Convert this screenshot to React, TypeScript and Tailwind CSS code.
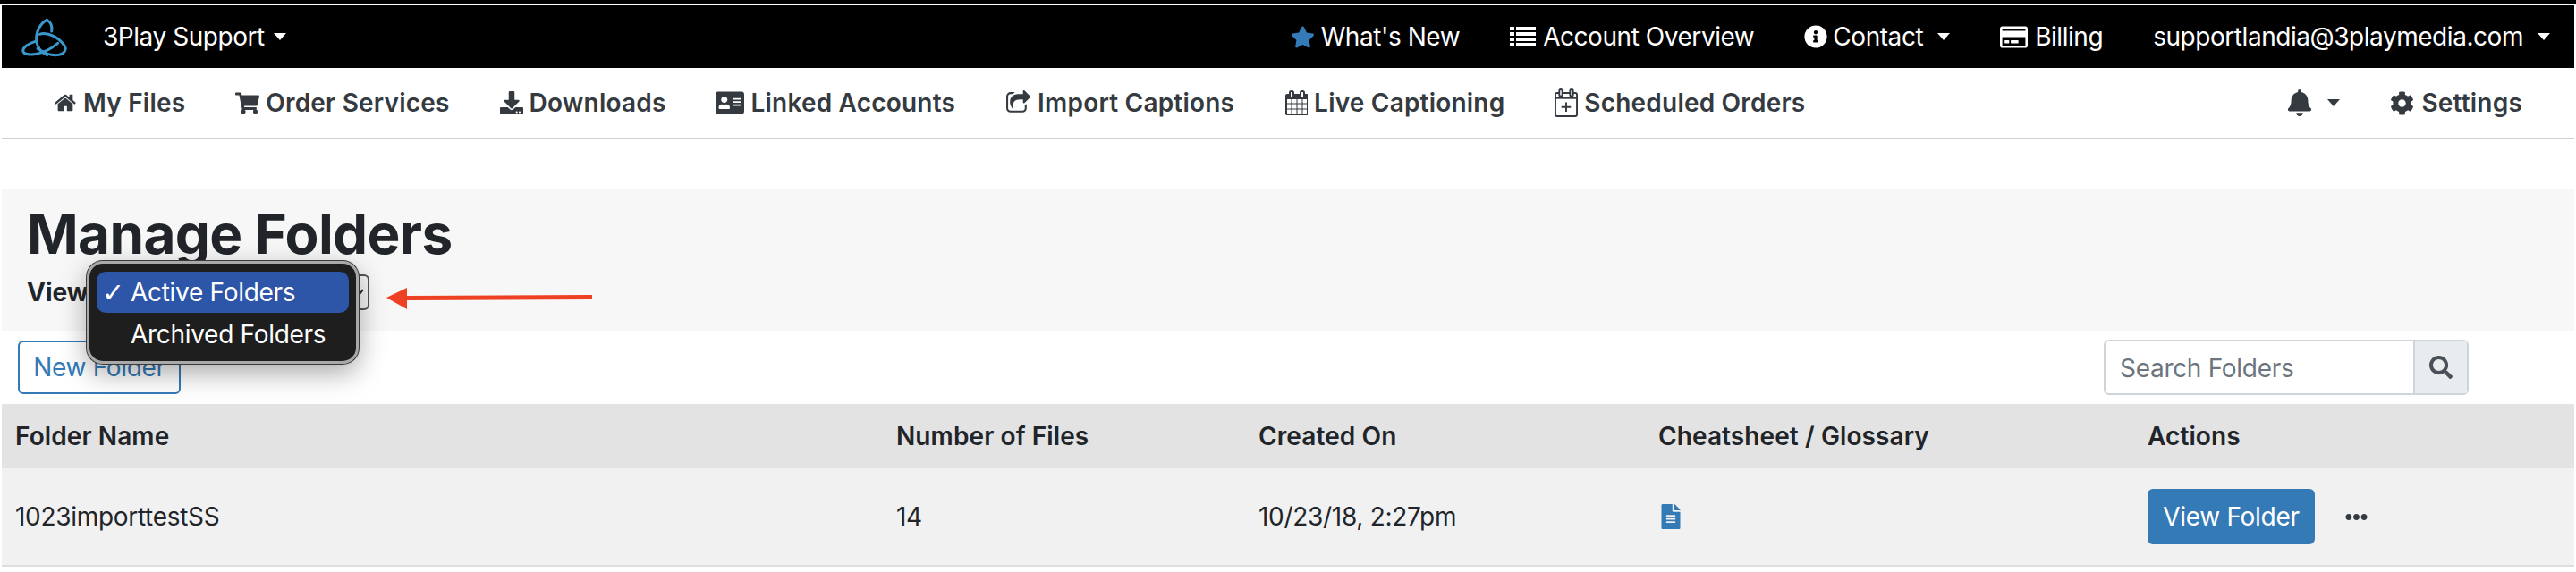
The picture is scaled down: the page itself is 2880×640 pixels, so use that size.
import React from 'react';
import {
  FaShoppingCart, FaDownload, FaAddressCard,
  FaStar, FaInfoCircle, FaRegCreditCard, FaBell, FaCog, FaSearch, FaFileAlt, FaEllipsisH,
} from 'react-icons/fa';

const Caret = ({ gap = 'ml-[16px]' }: { gap?: string }) => (
  <span className={`${gap} inline-block border-x-[7px] border-t-[8px] border-x-transparent border-t-current`} />
);

const Logo = () => (
  <svg viewBox="0 0 216 168" className="h-[56px] w-[72px]" fill="none" stroke="#3a97cb" strokeWidth="9" strokeLinecap="round">
    <path d="M115 28 C92 40 78 70 80 95 C82 120 98 138 116 146" />
    <path d="M115 28 C128 36 134 50 131 66" />
    <path d="M76 100 C50 108 32 122 36 134 C42 150 100 150 152 106" />
    <path d="M90 76 C120 66 155 88 174 114 C184 130 170 146 146 146 C126 146 100 136 84 124" />
  </svg>
);

const HomeIcon = () => (
  <svg viewBox="0 0 1792 1792" width="26" height="26" fill="currentColor">
    <path d="M1472 992v480q0 26-19 45t-45 19h-384v-384h-256v384h-384q-26 0-45-19t-19-45v-480q0-1 .5-3t.5-3l575-474 575 474q1 2 1 6zm223-69l-62 74q-8 9-21 11h-3q-13 0-21-7l-692-577-692 577q-12 8-24 7-13-2-21-11l-62-74q-8-10-7-23.500t11-21.500l719-599q32-26 76-26t76 26l244 204v-195q0-14 9-23t23-9h192q14 0 23 9t9 23v408l219 182q10 8 11 21.500t-7 23.500z" />
  </svg>
);

const ShareIcon = () => (
  <svg viewBox="0 0 1792 1792" width="29" height="29" fill="currentColor">
    <path d="M1472 989v259q0 119-84.500 203.500t-203.500 84.500h-832q-119 0-203.500-84.500t-84.500-203.500v-832q0-119 84.500-203.500t203.500-84.500h255q13 0 22.500 9.500t9.500 22.500q0 27-26 32-77 26-133 60-10 4-16 4h-112q-66 0-113 47t-47 113v832q0 66 47 113t113 47h832q66 0 113-47t47-113v-214q0-19 18-29 28-13 54-37 16-16 35-8 21 9 21 29zm237-496l-384 384q-18 19-45 19-12 0-25-5-39-17-39-59v-192h-160q-323 0-438 131-119 137-74 473 3 23-20 34-8 2-12 2-16 0-26-13-10-14-21-31t-39.500-68.500-49.500-99-38.500-114-17.500-122.500q0-49 3.500-91t14-90 28-88 47-81.500 68.500-74 94.500-61.500 124.500-48.500 159.500-30.500 196.500-11h160v-192q0-42 39-59 13-5 25-5 26 0 45 19l384 384q19 19 19 45t-19 45z" />
  </svg>
);

const CalendarIcon = () => (
  <svg viewBox="0 0 1664 1792" width="26" height="28" fill="currentColor">
    <path d="M192 1664h288v-288h-288v288zm352 0h320v-288h-320v288zm-352-352h288v-320h-288v320zm352 0h320v-320h-320v320zm-352-384h288v-288h-288v288zm736 736h320v-288h-320v288zm-384-736h320v-288h-320v288zm768 736h288v-288h-288v288zm-384-352h320v-320h-320v320zm-352-864v-288q0-13-9.500-22.500t-22.500-9.500h-64q-13 0-22.500 9.500t-9.500 22.500v288q0 13 9.500 22.500t22.500 9.500h64q13 0 22.500-9.500t9.500-22.500zm736 864h288v-320h-288v320zm-384-384h320v-288h-320v288zm384 0h288v-288h-288v288zm32-480v-288q0-13-9.500-22.500t-22.500-9.500h-64q-13 0-22.500 9.500t-9.500 22.500v288q0 13 9.500 22.500t22.500 9.500h64q13 0 22.500-9.500t9.500-22.500zm384-64v1280q0 52-38 90t-90 38h-1408q-52 0-90-38t-38-90v-1280q0-52 38-90t90-38h128v-96q0-66 47-113t113-47h64q66 0 113 47t47 113v96h384v-96q0-66 47-113t113-47h64q66 0 113 47t47 113v96h128q52 0 90 38t38 90z" />
  </svg>
);

const CalendarPlusIcon = () => (
  <svg viewBox="0 0 27 33" width="26" height="32" fill="none" stroke="currentColor" strokeWidth="2">
    <rect x="1" y="5" width="25" height="27" rx="2" />
    <path d="M1 11h25" />
    <rect x="5.500" y="1" width="3.500" height="8" rx="1.750" fill="#fff" />
    <rect x="18" y="1" width="3.500" height="8" rx="1.750" fill="#fff" />
    <path d="M13.500 16v11M8 21.500h11" />
  </svg>
);

const ListIcon = () => (
  <svg viewBox="0 0 29 22" width="29" height="22" fill="currentColor">
    <rect x="0" y="0" width="5" height="4" />
    <rect x="7" y="0" width="22" height="4" />
    <rect x="0" y="6" width="5" height="4" />
    <rect x="7" y="6" width="22" height="4" />
    <rect x="0" y="12" width="5" height="4" />
    <rect x="7" y="12" width="22" height="4" />
    <rect x="0" y="18" width="5" height="4" />
    <rect x="7" y="18" width="22" height="4" />
  </svg>
);

const NAV = [
  { label: 'My Files', icon: <HomeIcon /> },
  { label: 'Order Services', icon: <FaShoppingCart size={27} /> },
  { label: 'Downloads', icon: <FaDownload size={26} /> },
  { label: 'Linked Accounts', icon: <FaAddressCard size={32} /> },
  { label: 'Import Captions', icon: <ShareIcon /> },
  { label: 'Live Captioning', icon: <CalendarIcon /> },
  { label: 'Scheduled Orders', icon: <CalendarPlusIcon /> },
];

export default function App() {
  return (
    <div className="relative h-[640px] w-[2880px] overflow-hidden bg-white font-['Inter',sans-serif] text-[28px] tracking-[-0.3px] text-[#212529]">
      <div className="h-[4px] bg-black" />
      <div className="h-[2px] bg-white" />

      <div className="px-[2px]">
        {/* top bar */}
        <div className="flex h-[70px] items-center justify-between bg-black pl-[12px] pr-[27px] tracking-[-0.45px] text-white">
          <div className="flex items-center">
            <Logo />
            <span className="ml-[29px]">3Play Support</span>
            <Caret gap="ml-[10px]" />
          </div>
          <div className="flex items-center gap-[56px]">
            <span className="flex items-center gap-[7px]"><FaStar size={27} className="text-[#337ab7]" />What's New</span>
            <span className="flex items-center gap-[8px]"><ListIcon />Account Overview</span>
            <span className="flex items-center"><FaInfoCircle size={26} className="mr-[6px]" />Contact<Caret /></span>
            <span className="flex items-center gap-[8px]"><FaRegCreditCard size={31} />Billing</span>
            <span className="flex items-center">supportlandia@3playmedia.com<Caret /></span>
          </div>
        </div>

        {/* nav */}
        <div className="flex h-[80px] items-center justify-between border-b-2 border-[#cfcfcf] px-[58px] font-semibold tracking-[0.2px] text-[#343a40]">
          <div className="flex items-center gap-[56px]">
            {NAV.map((n) => (
              <span key={n.label} className="flex items-center gap-[7px]">{n.icon}{n.label}</span>
            ))}
          </div>
          <div className="flex items-center gap-[56px]">
            <span className="flex items-center"><FaBell size={30} /><Caret /></span>
            <span className="flex items-center gap-[8px]"><FaCog size={27} />Settings</span>
          </div>
        </div>

        {/* heading */}
        <div className="mt-[56px] h-[158px] bg-[#f7f7f7] pl-[28px] pt-[12px]">
          <h1 className="text-[62px] font-bold leading-[76px] tracking-[-0.65px]">Manage Folders</h1>
          <div className="mt-[7px] flex h-[40px] items-center">
            <span className="font-bold tracking-normal">View</span>
            <span className="ml-[10px] flex h-[40px] w-[304px] items-center justify-end rounded-[6px] border-2 border-[#555] pr-[3px]">
              <svg viewBox="0 0 10 8" width="10" height="8" fill="none" stroke="#222" strokeWidth="2"><path d="M1 2l3 4 4-5" /></svg>
            </span>
          </div>
        </div>

        {/* toolbar */}
        <div className="flex h-[82px] items-center justify-between pl-[18px] pr-[118px]">
          <button className="h-[60px] w-[182px] rounded-[6px] border-2 border-[#337ab7] text-[#337ab7]">New Folder</button>
          <div className="flex h-[62px] w-[408px] rounded-[6px] border-2 border-[#ced4da]">
            <span className="flex flex-1 items-center pl-[16px] pt-[2px] text-[#6c757d]">Search Folders</span>
            <span className="flex w-[60px] items-center justify-center border-l-2 border-[#ced4da] bg-[#e9ecef] text-[#495057]"><FaSearch size={26} /></span>
          </div>
        </div>

        {/* table */}
        <div className="grid grid-cols-[1000px_405px_447px_547px_1fr]">
          <div className="flex h-[72px] items-center bg-[#e3e3e3] pl-[15px] font-semibold tracking-[0.1px]">Folder Name</div>
          <div className="flex h-[72px] items-center bg-[#e3e3e3] font-semibold tracking-[0.1px]">Number of Files</div>
          <div className="flex h-[72px] items-center bg-[#e3e3e3] font-semibold tracking-[0.1px]">Created On</div>
          <div className="flex h-[72px] items-center bg-[#e3e3e3] font-semibold tracking-[0.1px]">Cheatsheet / Glossary</div>
          <div className="flex h-[72px] items-center bg-[#e3e3e3] font-semibold tracking-[0.1px]">Actions</div>

          <div className="flex h-[110px] items-center border-b-2 border-[#dedede] bg-[#f1f1f1] pl-[15px]">1023importtestSS</div>
          <div className="flex h-[110px] items-center border-b-2 border-[#dedede] bg-[#f1f1f1]">14</div>
          <div className="flex h-[110px] items-center border-b-2 border-[#dedede] bg-[#f1f1f1]">10/23/18, 2:27pm</div>
          <div className="flex h-[110px] items-center border-b-2 border-[#dedede] bg-[#f1f1f1] text-[#337ab7]"><FaFileAlt size={28} /></div>
          <div className="flex h-[110px] items-center gap-[34px] border-b-2 border-[#dedede] bg-[#f1f1f1]">
            <button className="h-[62px] w-[187px] rounded-[6px] bg-[#337ab7] text-white">View Folder</button>
            <FaEllipsisH size={25} className="text-[#343a40]" />
          </div>
        </div>
      </div>

      {/* native select menu, open over the page */}
      <div className="absolute left-[97px] top-[292px] h-[115px] w-[304px] rounded-[18px] border-[3px] border-[#a9a9a9] bg-[#1e1e1e] px-[8px] pt-[9px] text-white shadow-[0_0_0_1px_#3a3a3a,0_10px_30px_rgba(0,0,0,0.35)]">
        <div className="flex h-[46px] items-center rounded-[10px] bg-[#2d55a8]">
          <span className="w-[38px] pl-[6px] font-['DejaVu_Sans',sans-serif] text-[30px] font-bold">✓</span>Active Folders
        </div>
        <div className="mt-[1px] flex h-[46px] items-center pl-[38px]">Archived Folders</div>
      </div>

      {/* red annotation arrow */}
      <svg className="absolute left-[430px] top-[320px]" width="234" height="28" viewBox="0 0 234 28">
        <path d="M2 13 L25 2 L25 11 L232 10 L232 15 L25 16 L25 26 Z" fill="#ee4023" />
      </svg>
    </div>
  );
}
